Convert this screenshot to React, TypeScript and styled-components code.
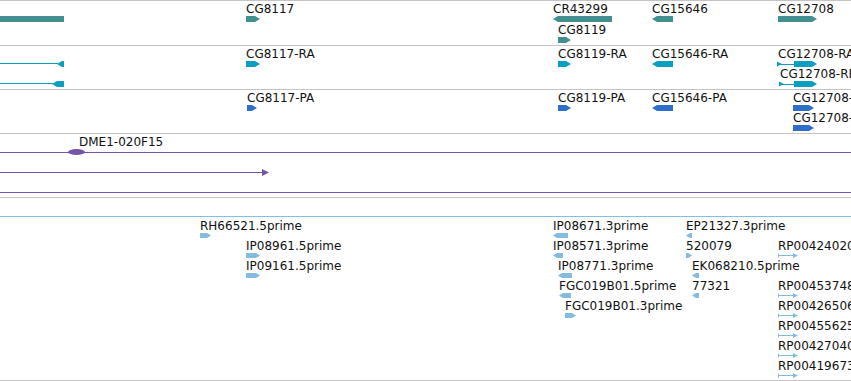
import React from "react";
import styled, { createGlobalStyle } from "styled-components";

const GlobalStyle = createGlobalStyle`
  html, body {
    margin: 0;
    padding: 0;
    background: #ffffff;
    overflow: hidden;
  }
  body {
    font-family: "DejaVu Sans", "Liberation Sans", sans-serif;
  }
`;

const GENE = "#438e90";
const MRNA = "#0a9fc0";
const CDS = "#2f6ecb";
const CLONE = "#7553a8";
const EST = "#84bbe0";
const RULE = "#c4c4c4";

type Dir = "left" | "right" | "none";

type Feat = {
  x: number;
  y: number;
  w: number;
  dir: Dir;
  label?: string;
  lx?: number;
  ly?: number;
  intron?: number; // width of leading thin line (transcripts)
  span?: boolean; // thin line with arrow (read pairs)
};

const View = styled.div`
  width: 851px;
  height: 381px;
  display: flex;
  flex-direction: column;
  border-top: 1px solid ${RULE};
  box-sizing: border-box;
  overflow: hidden;
`;

const Track = styled.div<{ $h: number; $rule?: string }>`
  position: relative;
  height: ${(p) => p.$h}px;
  flex: none;
  border-bottom: 1px solid ${(p) => p.$rule || RULE};
  overflow: hidden;
`;

const Label = styled.div<{ $x: number; $y: number }>`
  position: absolute;
  left: ${(p) => p.$x}px;
  top: ${(p) => p.$y}px;
  font-size: 12px;
  line-height: 14px;
  color: #111;
  white-space: nowrap;
`;

const clip = (dir: Dir, tip: number) => {
  if (dir === "right")
    return `polygon(0 0, calc(100% - ${tip}px) 0, 100% 50%, calc(100% - ${tip}px) 100%, 0 100%)`;
  if (dir === "left")
    return `polygon(${tip}px 0, 100% 0, 100% 100%, ${tip}px 100%, 0 50%)`;
  return "none";
};

const Bar = styled.div<{ $x: number; $y: number; $w: number; $h: number; $c: string; $dir: Dir }>`
  position: absolute;
  left: ${(p) => p.$x}px;
  top: ${(p) => p.$y}px;
  width: ${(p) => p.$w}px;
  height: ${(p) => p.$h}px;
  background: ${(p) => p.$c};
  clip-path: ${(p) => clip(p.$dir, p.$h > 5 ? 5 : 4)};
`;

const Rule = styled.div<{ $x: number; $y: number; $w: number; $c: string }>`
  position: absolute;
  left: ${(p) => p.$x}px;
  top: ${(p) => p.$y}px;
  width: ${(p) => p.$w}px;
  height: 1px;
  background: ${(p) => p.$c};
`;

const Oval = styled.div<{ $x: number; $y: number }>`
  position: absolute;
  left: ${(p) => p.$x}px;
  top: ${(p) => p.$y}px;
  width: 17px;
  height: 6px;
  border-radius: 50%;
  background: ${CLONE};
`;

const Glyph = styled.svg<{ $x: number; $y: number }>`
  position: absolute;
  left: ${(p) => p.$x}px;
  top: ${(p) => p.$y}px;
  overflow: visible;
`;

const StartTick: React.FC<{ x: number; y: number; c: string }> = ({ x, y, c }) => (
  <Glyph $x={x} $y={y} width={6} height={6} viewBox="0 0 6 6">
    <polygon points="0,0.5 5,3 0,5.5" fill={c} />
  </Glyph>
);

const SpanArrow: React.FC<{ x: number; y: number; w: number; c: string }> = ({ x, y, w, c }) => (
  <Glyph $x={x} $y={y} width={w} height={5} viewBox={`0 0 ${w} 5`}>
    <rect x={0} y={0.5} width={1} height={4} fill={c} />
    <rect x={0} y={2} width={w - 4} height={1} fill={c} />
    <polygon points={`${w - 5},0 ${w},2.5 ${w - 5},5`} fill={c} />
  </Glyph>
);

const FeatureSet: React.FC<{ feats: Feat[]; color: string; h: number }> = ({ feats, color, h }) => (
  <>
    {feats.map((f, i) => (
      <React.Fragment key={i}>
        {f.label && <Label $x={f.lx ?? f.x} $y={f.ly ?? f.y - 14}>{f.label}</Label>}
        {f.span ? (
          <SpanArrow x={f.x} y={f.y} w={f.w} c={color} />
        ) : f.intron ? (
          <>
            <StartTick x={f.x - 1} y={f.y} c={color} />
            <Rule $x={f.x} $y={f.y + Math.floor(h / 2)} $w={f.intron} $c={color} />
            <Bar $x={f.x + f.intron} $y={f.y} $w={f.w - f.intron} $h={h} $c={color} $dir={f.dir} />
          </>
        ) : (
          <Bar $x={f.x} $y={f.y} $w={f.w} $h={h} $c={color} $dir={f.dir} />
        )}
      </React.Fragment>
    ))}
  </>
);

const genes: Feat[] = [
  { x: 0, y: 15, w: 64, dir: "none" },
  { x: 246, y: 15, w: 14, dir: "right", label: "CG8117", ly: 1 },
  { x: 553, y: 15, w: 59, dir: "left", label: "CR43299", ly: 1 },
  { x: 558, y: 36, w: 13, dir: "right", label: "CG8119", ly: 22 },
  { x: 652, y: 15, w: 21, dir: "left", label: "CG15646", ly: 1 },
  { x: 778, y: 15, w: 39, dir: "right", label: "CG12708", ly: 1 },
];

const transcripts: Feat[] = [
  { x: 57, y: 15, w: 7, dir: "left" },
  { x: 52, y: 35, w: 12, dir: "left" },
  { x: 246, y: 15, w: 14, dir: "right", label: "CG8117-RA", ly: 1 },
  { x: 558, y: 15, w: 13, dir: "right", label: "CG8119-RA", ly: 1 },
  { x: 652, y: 15, w: 21, dir: "left", label: "CG15646-RA", ly: 1 },
  { x: 778, y: 15, w: 39, dir: "right", intron: 16, label: "CG12708-RA", ly: 1 },
  { x: 780, y: 35, w: 37, dir: "right", intron: 14, label: "CG12708-RB", ly: 21 },
];

const cds: Feat[] = [
  { x: 247, y: 15, w: 10, dir: "right", label: "CG8117-PA", ly: 1 },
  { x: 558, y: 15, w: 13, dir: "right", label: "CG8119-PA", ly: 1 },
  { x: 652, y: 15, w: 21, dir: "left", label: "CG15646-PA", ly: 1 },
  { x: 793, y: 15, w: 21, dir: "right", label: "CG12708-PA", ly: 1 },
  { x: 793, y: 35, w: 21, dir: "right", label: "CG12708-PB", ly: 21 },
];

const row = (r: number) => 16 + r * 20;

const ests: Feat[] = [
  { x: 200, y: row(0), w: 11, dir: "right", label: "RH66521.5prime" },
  { x: 246, y: row(1), w: 14, dir: "right", label: "IP08961.5prime" },
  { x: 246, y: row(2), w: 14, dir: "right", label: "IP09161.5prime" },
  { x: 553, y: row(0), w: 15, dir: "left", label: "IP08671.3prime" },
  { x: 553, y: row(1), w: 10, dir: "left", label: "IP08571.3prime" },
  { x: 558, y: row(2), w: 14, dir: "left", label: "IP08771.3prime" },
  { x: 559, y: row(3), w: 12, dir: "left", label: "FGC019B01.5prime" },
  { x: 565, y: row(4), w: 11, dir: "right", label: "FGC019B01.3prime" },
  { x: 686, y: row(0), w: 6, dir: "left", label: "EP21327.3prime" },
  { x: 686, y: row(1), w: 6, dir: "right", label: "520079" },
  { x: 692, y: row(2), w: 7, dir: "left", label: "EK068210.5prime" },
  { x: 692, y: row(3), w: 7, dir: "left", label: "77321" },
  { x: 778, y: row(1), w: 20, dir: "right", span: true, label: "RP00424020.5prime" },
  { x: 778, y: row(3), w: 20, dir: "right", span: true, label: "RP00453748.5prime" },
  { x: 778, y: row(4), w: 20, dir: "right", span: true, label: "RP00426506.5prime" },
  { x: 778, y: row(5), w: 20, dir: "right", span: true, label: "RP00455625.5prime" },
  { x: 778, y: row(6), w: 20, dir: "right", span: true, label: "RP00427040.5prime" },
  { x: 778, y: row(7), w: 20, dir: "right", span: true, label: "RP00419673.5prime" },
];

export default function App() {
  return (
    <>
      <GlobalStyle />
      <View>
        <Track $h={44}>
          <FeatureSet feats={genes} color={GENE} h={6} />
        </Track>
        <Track $h={43}>
          <Rule $x={0} $y={17} $w={58} $c={MRNA} />
          <Rule $x={0} $y={37} $w={53} $c={MRNA} />
          <FeatureSet feats={transcripts} color={MRNA} h={6} />
        </Track>
        <Track $h={43}>
          <FeatureSet feats={cds} color={CDS} h={6} />
        </Track>
        <Track $h={63}>
          <Rule $x={0} $y={18} $w={851} $c={CLONE} />
          <Oval $x={68} $y={15} />
          <Label $x={79} $y={1}>DME1-020F15</Label>
          <Rule $x={0} $y={38} $w={264} $c={CLONE} />
          <Glyph $x={262} $y={35} width={7} height={7} viewBox="0 0 7 7">
            <polygon points="0,0 7,3.5 0,7" fill={CLONE} />
          </Glyph>
          <Rule $x={0} $y={58} $w={851} $c={CLONE} />
        </Track>
        <Track $h={18} $rule="#86bde2" />
        <Track $h={163}>
          <FeatureSet feats={ests} color={EST} h={5} />
        </Track>
      </View>
    </>
  );
}
